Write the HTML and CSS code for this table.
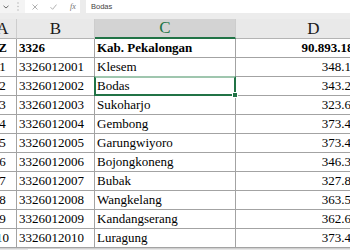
FILE: index.html
```html
<!DOCTYPE html>
<html>
<head>
<meta charset="utf-8">
<link rel="stylesheet" href="styles.css">
</head>
<body>
<div class="app">
  <div class="formula-bar">
    <div class="namebox-arrow">
      <svg width="6" height="4" viewBox="0 0 6 4"><path d="M0.5 0.8 L3 3 L5.5 0.8" fill="none" stroke="#6b6b6b" stroke-width="1"/></svg>
    </div>
    <div class="grip">
      <svg width="2" height="9" viewBox="0 0 2 9"><circle cx="1" cy="1" r="0.7" fill="#b0b0b0"/><circle cx="1" cy="4.5" r="0.7" fill="#b0b0b0"/><circle cx="1" cy="8" r="0.7" fill="#b0b0b0"/></svg>
    </div>
    <div class="fx-buttons">
      <svg class="btn" width="6" height="6" viewBox="0 0 6 6"><path d="M0.5 0.5 L5.5 5.5 M5.5 0.5 L0.5 5.5" stroke="#a8a8a8" stroke-width="0.9" fill="none"/></svg>
      <svg class="btn" width="7" height="6" viewBox="0 0 7 6"><path d="M0.5 3.2 L2.6 5.3 L6.5 0.6" stroke="#a8a8a8" stroke-width="0.9" fill="none"/></svg>
      <span class="fx">fx</span>
    </div>
    <div class="formula-input">Bodas</div>
  </div>

  <div class="sheet">
    <div class="hdr">A</div>
    <div class="hdr">B</div>
    <div class="hdr hdr-active">C</div>
    <div class="hdr">D</div>

    <div class="cell num bold">Z</div>
    <div class="cell code bold">3326</div>
    <div class="cell name bold">Kab. Pekalongan</div>
    <div class="cell val bold total">90.893.184</div>

    <div class="cell num">1</div>
    <div class="cell code">3326012001</div>
    <div class="cell name">Klesem</div>
    <div class="cell val">348.126</div>

    <div class="cell num">2</div>
    <div class="cell code">3326012002</div>
    <div class="cell name active">Bodas</div>
    <div class="cell val">343.257</div>

    <div class="cell num">3</div>
    <div class="cell code">3326012003</div>
    <div class="cell name">Sukoharjo</div>
    <div class="cell val">323.618</div>

    <div class="cell num">4</div>
    <div class="cell code">3326012004</div>
    <div class="cell name">Gembong</div>
    <div class="cell val">373.442</div>

    <div class="cell num">5</div>
    <div class="cell code">3326012005</div>
    <div class="cell name">Garungwiyoro</div>
    <div class="cell val">373.405</div>

    <div class="cell num">6</div>
    <div class="cell code">3326012006</div>
    <div class="cell name">Bojongkoneng</div>
    <div class="cell val">346.391</div>

    <div class="cell num">7</div>
    <div class="cell code">3326012007</div>
    <div class="cell name">Bubak</div>
    <div class="cell val">327.864</div>

    <div class="cell num">8</div>
    <div class="cell code">3326012008</div>
    <div class="cell name">Wangkelang</div>
    <div class="cell val">363.529</div>

    <div class="cell num">9</div>
    <div class="cell code">3326012009</div>
    <div class="cell name">Kandangserang</div>
    <div class="cell val">362.673</div>

    <div class="cell num">10</div>
    <div class="cell code">3326012010</div>
    <div class="cell name">Luragung</div>
    <div class="cell val">373.416</div>
  </div>

  <div class="tabs">
    <div class="tab-nav"></div>
    <div class="tab"></div>
  </div>
</div>
</body>
</html>
```

FILE: styles.css
```css
html, body {
  margin: 0;
  padding: 0;
  background: #ffffff;
}

body {
  width: 350px;
  height: 250px;
  overflow: hidden;
  font-family: "Liberation Serif", "Times New Roman", serif;
  color: #000;
}

.app {
  display: flex;
  flex-direction: column;
  width: 350px;
}

/* ---------- formula bar ---------- */
.formula-bar {
  height: 19px;
  background: #ececec;
  display: flex;
  align-items: flex-start;
  flex: none;
}

.namebox-arrow {
  width: 14px;
  height: 13px;
  background: #f4f4f4;
  display: flex;
  align-items: center;
  justify-content: center;
  padding-right: 2px;
  box-sizing: border-box;
}

.grip {
  width: 11px;
  height: 13px;
  background: #f4f4f4;
  display: flex;
  align-items: center;
  justify-content: center;
  box-sizing: border-box;
  padding-right: 4px;
}

.fx-buttons {
  width: 55px;
  height: 13px;
  background: #ffffff;
  display: flex;
  align-items: center;
  padding-left: 7px;
  box-sizing: border-box;
  gap: 12px;
}

.fx {
  font-family: "Liberation Serif", serif;
  font-style: italic;
  font-size: 8px;
  color: #707070;
  line-height: 8px;
  margin-left: 1px;
}

.formula-input {
  flex: 1;
  margin-left: 6px;
  height: 13px;
  background: #ffffff;
  font-family: "Liberation Sans", Arial, sans-serif;
  font-size: 7.5px;
  line-height: 13px;
  color: #444;
  padding-left: 5px;
}

/* ---------- sheet ---------- */
.sheet {
  display: grid;
  grid-template-columns: 28px 78px 141px 156px;
  grid-auto-rows: 19px;
  grid-template-rows: 20px;
  margin-left: -11px;
  width: 403px;
  flex: none;
}

.hdr {
  background: #e9e9e9;
  border-right: 1px solid #cdcdcd;
  border-bottom: 1px solid #b4b4b4;
  box-sizing: border-box;
  font-size: 17px;
  line-height: 19px;
  text-align: center;
  color: #1a1a1a;
}

.hdr-active {
  background: #d3d3d3;
  color: #217346;
  border-bottom: 2px solid #217346;
  line-height: 18px;
}

.cell {
  border-right: 1px solid #a3a3a3;
  border-bottom: 1px solid #a3a3a3;
  box-sizing: border-box;
  font-size: 13px;
  line-height: 18px;
  white-space: nowrap;
  overflow: visible;
}

.bold {
  font-weight: bold;
}

.num {
  text-align: center;
}

.code,
.name {
  padding-left: 2px;
}

.val {
  text-align: right;
  padding-right: 27px;
}

.val.total {
  padding-right: 31px;
}

.active {
  position: relative;
}

.active::after {
  content: "";
  position: absolute;
  left: -1px;
  top: -1px;
  right: -1px;
  bottom: -1px;
  border: 2px solid #217346;
  border-top-color: #9fc6ae;
  z-index: 2;
}

.active::before {
  content: "";
  position: absolute;
  right: -3px;
  bottom: -3px;
  width: 4px;
  height: 4px;
  background: #217346;
  border: 1px solid #ffffff;
  z-index: 3;
}

/* ---------- sheet tabs ---------- */
.tabs {
  height: 10px;
  background: #e6e6e6;
  display: flex;
  flex: none;
  border-top: 1px solid #d0d0d0;
}

.tab-nav {
  width: 28px;
}

.tab {
  width: 32px;
  background: #ffffff;
}
```
